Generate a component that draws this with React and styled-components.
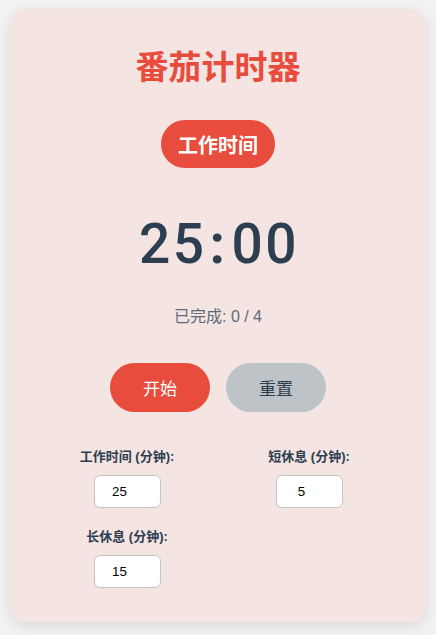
import React from "react";
import styled, { createGlobalStyle } from "styled-components";

const GlobalStyle = createGlobalStyle`
  html, body { margin: 0; padding: 0; }
  body {
    background: #f2f2f2;
    font-family: "Liberation Sans", "Noto Sans CJK SC", sans-serif;
  }
  #root { padding: 9px 10px 13px; }
`;

const Card = styled.div`
  background: #f4e4e2;
  border-radius: 16px;
  box-shadow: 0 4px 14px rgba(0, 0, 0, 0.1);
  padding: 39px 30px 34px;
  display: flex;
  flex-direction: column;
  align-items: center;
`;

const Title = styled.h1`
  margin: 0;
  font-size: 33px;
  line-height: 40px;
  font-weight: 700;
  color: #e74c3c;
`;

const Badge = styled.div`
  margin-top: 32px;
  height: 48px;
  padding: 0 17px;
  display: inline-flex;
  align-items: center;
  border-radius: 24px;
  background: #e74c3c;
  color: #fff;
  font-size: 20px;
  font-weight: 700;
`;

const Timer = styled.div`
  margin-top: 44px;
  font-family: Roboto, "Liberation Sans", sans-serif;
  font-size: 55px;
  font-weight: 500;
  line-height: 64px;
  letter-spacing: 2.5px;
  color: #2c3e50;
  padding-left: 2px;
`;

const Colon = styled.span`
  margin: 0 4px 0 3px;
  font-weight: 700;
`;

const Progress = styled.div`
  margin-top: 31px;
  font-size: 16px;
  line-height: 20px;
  color: #5d6b7a;
`;

const Buttons = styled.div`
  margin-top: 36px;
  display: flex;
  gap: 16px;
`;

const Button = styled.button`
  width: 100px;
  height: 49px;
  border: none;
  border-radius: 25px;
  font-family: inherit;
  font-size: 17px;
  background: ${(p) => (p.$primary ? "#e74c3c" : "#bdc3c7")};
  color: ${(p) => (p.$primary ? "#fff" : "#2c3e50")};
  cursor: pointer;
`;

const Settings = styled.div`
  margin-top: 37px;
  align-self: stretch;
  display: grid;
  grid-template-columns: 1fr 1fr;
  column-gap: 8px;
  row-gap: 21px;
`;

const Field = styled.label`
  display: flex;
  flex-direction: column;
  align-items: center;
  gap: 10px;
`;

const Label = styled.span`
  font-size: 13px;
  line-height: 16px;
  font-weight: 700;
  color: #2c3e50;
`;

const Input = styled.input`
  box-sizing: border-box;
  width: 67px;
  height: 33px;
  border: 1px solid #c4c4c4;
  border-radius: 6px;
  background: #fff;
  text-align: center;
  font-family: "Liberation Sans", sans-serif;
  font-size: 13.333px;
  color: #000;
  padding: 1px 2px;
`;

const settings = [
  { label: "工作时间 (分钟):", value: 25 },
  { label: "短休息 (分钟):", value: 5 },
  { label: "长休息 (分钟):", value: 15 },
];

export default function App() {
  return (
    <>
      <GlobalStyle />
      <Card>
        <Title>番茄计时器</Title>
        <Badge>工作时间</Badge>
        <Timer>
          25<Colon>:</Colon>00
        </Timer>
        <Progress>已完成: 0 / 4</Progress>
        <Buttons>
          <Button $primary>开始</Button>
          <Button>重置</Button>
        </Buttons>
        <Settings>
          {settings.map((s) => (
            <Field key={s.label}>
              <Label>{s.label}</Label>
              <Input type="number" defaultValue={s.value} min="1" />
            </Field>
          ))}
        </Settings>
      </Card>
    </>
  );
}
